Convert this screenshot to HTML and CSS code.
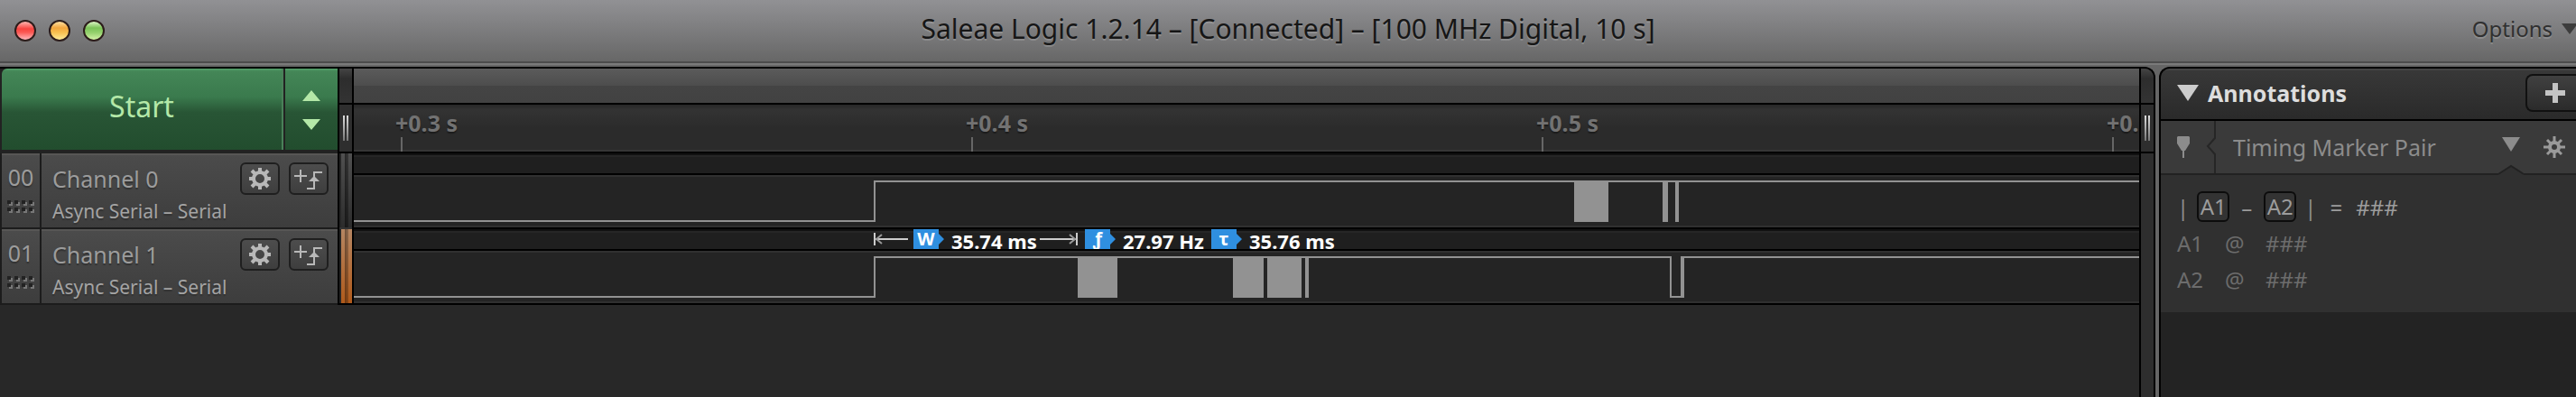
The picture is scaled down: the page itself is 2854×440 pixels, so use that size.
FILE: index.html
```html
<!DOCTYPE html>
<html lang="en">
<head>
<meta charset="utf-8">
<title>Saleae Logic</title>
<link rel="stylesheet" href="styles.css">
</head>
<body>
<svg class="defs" aria-hidden="true">
  <defs>
    <symbol id="gear" viewBox="0 0 24 24">
      <circle cx="12" cy="12" r="7" fill="none" stroke="currentColor" stroke-width="4"/>
      <path d="M12 0v5M12 19v5M0 12h5M19 12h5M3 3l4 4M17 17l4 4M21 3l-4 4M7 17l-4 4" stroke="currentColor" stroke-width="4" fill="none"/>
    </symbol>
    <symbol id="cog" viewBox="0 0 24 24">
      <circle cx="12" cy="12" r="5" fill="none" stroke="currentColor" stroke-width="4"/>
      <path d="M12 0v6M12 18v6M0 12h6M18 12h6M4 4l4 4M16 16l4 4M20 4l-4 4M8 16l-4 4" stroke="currentColor" stroke-width="3" fill="none"/>
    </symbol>
    <symbol id="trigger" viewBox="0 0 32 24">
      <path d="M0 9h14M7 2v14M31 5H22v18h-8" stroke="currentColor" stroke-width="2" fill="none"/>
      <path d="M16 15l6-6 6 6z" fill="currentColor"/>
    </symbol>
    <symbol id="dots" viewBox="0 0 30 14">
      <path d="M2 2h4v4H2zM10 2h4v4h-4zM18 2h4v4h-4zM26 2h4v4h-4zM2 10h4v4H2zM10 10h4v4h-4zM18 10h4v4h-4zM26 10h4v4h-4z" fill="#777"/>
      <path d="M0 0h4v4H0zM8 0h4v4H8zM16 0h4v4h-4zM24 0h4v4h-4zM0 8h4v4H0zM8 8h4v4H8zM16 8h4v4h-4zM24 8h4v4h-4z" fill="#222"/>
    </symbol>
  </defs>
</svg>

<header class="titlebar">
  <div class="lights">
    <button class="light red" aria-label="Close"></button>
    <button class="light amber" aria-label="Minimize"></button>
    <button class="light green" aria-label="Zoom"></button>
  </div>
  <h1 class="title">Saleae Logic 1.2.14 – [Connected] – [100 MHz Digital, 10 s]</h1>
  <button class="options">Options
    <svg width="18" height="12" viewBox="0 0 18 12"><path d="M0 0h18L9 12z" fill="#3c3c3c"/></svg>
  </button>
</header>

<main class="main">
  <section class="workspace">
    <div class="channels">
      <div class="startbar">
        <button class="start">Start</button>
        <button class="stepper" aria-label="Capture settings">
          <svg width="20" height="44" viewBox="0 0 20 44"><path d="M10 0l10 12H0zM0 32h20L10 44z" fill="#b4e8a8"/></svg>
        </button>
      </div>
      <div class="channel">
        <div class="index">00<svg width="30" height="14"><use href="#dots"/></svg></div>
        <div class="info"><span class="name">Channel 0</span><span class="analyzer">Async Serial – Serial</span></div>
        <div class="tools">
          <button class="tool" aria-label="Channel 0 settings"><svg width="24" height="24"><use href="#gear"/></svg></button>
          <button class="tool" aria-label="Channel 0 trigger"><svg width="32" height="24"><use href="#trigger"/></svg></button>
        </div>
      </div>
      <div class="channel">
        <div class="index">01<svg width="30" height="14"><use href="#dots"/></svg></div>
        <div class="info"><span class="name">Channel 1</span><span class="analyzer">Async Serial – Serial</span></div>
        <div class="tools">
          <button class="tool" aria-label="Channel 1 settings"><svg width="24" height="24"><use href="#gear"/></svg></button>
          <button class="tool" aria-label="Channel 1 trigger"><svg width="32" height="24"><use href="#trigger"/></svg></button>
        </div>
      </div>
    </div>

    <div class="handle">
      <div class="handle-top"></div>
      <div class="handle-grip"><i></i><i></i></div>
      <div class="swatch"></div>
      <div class="swatch orange"></div>
    </div>

    <div class="waves">
      <div class="scrollbar"></div>
      <div class="ruler">
        <div class="tick">+0.3 s</div>
        <div class="tick">+0.4 s</div>
        <div class="tick">+0.5 s</div>
        <div class="tick">+0.6 s</div>
      </div>
      <div class="lane">
        <div class="strip"></div>
        <svg class="trace">
          <path d="M0 47H577V3H4000" fill="none" stroke="#929292" stroke-width="2"/>
          <path d="M1352 2h38v46h-38zM1450 2h6v46h-6zM1464 2h4v46h-4z" fill="#929292"/>
        </svg>
      </div>
      <div class="lane">
        <div class="strip measures">
          <svg class="span-start" width="38" height="22" viewBox="0 0 38 22"><path d="M1 4v14M2 11h36" stroke="#ccc" stroke-width="2"/><path d="M9 6l-6 5 6 5" fill="none" stroke="#999" stroke-width="2"/></svg>
          <span class="tag">W</span><span class="value">35.74 ms</span>
          <svg class="span-end" width="42" height="22" viewBox="0 0 42 22"><path d="M41 4v14M0 11h40" stroke="#ccc" stroke-width="2"/><path d="M33 6l6 5-6 5" fill="none" stroke="#999" stroke-width="2"/></svg>
          <span class="tag">ƒ</span><span class="value">27.97 Hz</span>
          <span class="tag">τ</span><span class="value">35.76 ms</span>
        </div>
        <svg class="trace">
          <path d="M0 47H577V3H1459V47H1472V3H4000" fill="none" stroke="#929292" stroke-width="2"/>
          <path d="M802 2h44v46h-44zM974 2h34v46h-34zM1012 2h38v46h-38zM1054 2h4v46h-4zM1470 2h4v46h-4z" fill="#929292"/>
        </svg>
      </div>
    </div>

    <div class="handle right">
      <div class="handle-top"></div>
      <div class="handle-grip"><i></i><i></i></div>
    </div>
  </section>

  <aside class="sidebar">
    <div class="side-head">
      <button class="toggle">
        <svg width="24" height="18" viewBox="0 0 24 18"><path d="M0 0h24L12 18z" fill="#ccc"/></svg>Annotations
      </button>
      <button class="add" aria-label="Add annotation">
        <svg width="22" height="22" viewBox="0 0 22 22"><path d="M11 0v22M0 11h22" stroke="#c4c4c4" stroke-width="6"/></svg>
      </button>
    </div>
    <div class="marker">
      <svg width="14" height="24" viewBox="0 0 14 24"><path d="M1 0h12l1 1v7l-5 8H8v8H6v-8H5L0 8V1z" fill="#8c8c8c"/></svg>
      <svg class="notch" width="12" height="58" viewBox="0 0 12 58"><path d="M10 0v19L2 28l8 9v21" fill="none" stroke="#262626" stroke-width="2"/></svg>
      <select class="kind" aria-label="Annotation type"><option>Timing Marker Pair</option></select>
      <svg class="drop" width="28" height="58" viewBox="0 0 28 58"><path d="M4 18h20L14 34z" fill="#8c8c8c"/><path d="M0 60v-1l14-9 14 9v1z" fill="#303030"/><path d="M0 59l14-9 14 9" fill="none" stroke="#222" stroke-width="2"/></svg>
      <button class="cog" aria-label="Annotation settings"><svg width="24" height="24"><use href="#cog"/></svg></button>
    </div>
    <div class="readout">
      <div class="formula"><span class="bar">|</span><button class="key">A1</button><span class="minus">–</span><button class="key">A2</button><span class="bar">|</span><span class="equals">=</span><span>###</span></div>
      <div class="point"><span>A1</span><span>@</span><span>###</span></div>
      <div class="point"><span>A2</span><span>@</span><span>###</span></div>
    </div>
  </aside>
</main>
</body>
</html>
```
FILE: styles.css
```css
* { box-sizing: border-box; }
body {
  margin: 0;
  min-height: 100vh;
  display: flex;
  flex-direction: column;
  overflow: hidden;
  background: #666;
  color: #9c9c9c;
  font-family: "Noto Sans", "Open Sans", sans-serif;
  font-size: 25px;
}
button, select {
  margin: 0;
  padding: 0;
  border: 0;
  background: none;
  color: inherit;
  font: inherit;
}
svg { display: block; flex: none; }
.defs { position: absolute; width: 0; height: 0; }

.titlebar {
  display: grid;
  grid-template-columns: 1fr auto 1fr;
  align-items: center;
  height: 74px;
  padding-bottom: 10px;
  background: linear-gradient(#919194, #676767 68px, #4c4c4c 68px, #4c4c4c 70px, #7a7a7a 70px, #7a7a7a 72px, #666 72px);
}
.lights { display: flex; gap: 14px; padding: 4px 0 0 16px; }
.light {
  width: 24px;
  height: 24px;
  border: 2px solid #2c1c1a;
  border-radius: 50%;
}
.red { background: linear-gradient(#ffb5b0, #f8433f 40%, #fb5a55 60%, #ffb9bd); }
.amber { background: linear-gradient(#ffe0a0, #f3a63e 35%, #f8c050 60%, #ffec98); }
.green { background: linear-gradient(#dcf5c4, #7cc258 35%, #93d06c 60%, #d4f2a8); }
.title {
  margin: 0;
  color: #161616;
  font-size: 30px;
  font-weight: 400;
  line-height: 40px;
  text-shadow: 0 2px 0 rgba(255, 255, 255, .18);
}
.options {
  display: flex;
  align-items: center;
  justify-self: end;
  gap: 10px;
  margin-right: -2px;
  color: #303030;
  font-size: 24px;
  line-height: 32px;
  text-shadow: 0 2px 0 rgba(255, 255, 255, .18);
}

.main { flex: 1; display: flex; gap: 4px; }
.workspace {
  flex: 1;
  min-width: 0;
  display: flex;
  align-items: flex-start;
  overflow: hidden;
  border: solid #000;
  border-width: 2px 2px 0 0;
  border-radius: 0 12px 0 0;
  background: #282828;
}

.channels {
  flex: none;
  width: 376px;
  border: solid #000;
  border-width: 0 2px 0 0;
  background: #1c1c1c;
}
.startbar {
  display: flex;
  gap: 2px;
  height: 94px;
  padding: 0 0 4px 2px;
  background: #222;
}
.start, .stepper {
  background: linear-gradient(#54a36c, #448657 3px, #3a7a4d 35%, #285535 54%, #224d2e);
  color: #b4e8a8;
}
.start {
  flex: 1;
  padding-bottom: 8px;
  border-right: 2px solid #4a8059;
  border-radius: 6px 0 0 0;
  font-size: 32px;
}
.stepper { display: flex; justify-content: center; align-items: center; width: 58px; padding-top: 2px; }
.channel {
  display: flex;
  gap: 2px;
  height: 84px;
  padding: 0 0 2px 2px;
}
.index, .info, .tools {
  border-top: 2px solid #575655;
  background: linear-gradient(#4b4b4b, #3d3d3d);
  text-shadow: 0 2px 1px #333;
}
.index {
  display: flex;
  flex-direction: column;
  align-items: center;
  gap: 10px;
  width: 42px;
  padding-top: 8px;
  line-height: 32px;
}
.info {
  flex: 1;
  display: flex;
  flex-direction: column;
  gap: 6px;
  padding: 10px 0 0 12px;
  white-space: nowrap;
}
.name { line-height: 32px; }
.analyzer { color: #a4a4a4; font-size: 21px; line-height: 28px; }
.tools { display: flex; gap: 10px; margin-left: -2px; padding: 8px 10px 0 0; }
.tool {
  display: flex;
  align-items: center;
  justify-content: center;
  width: 44px;
  height: 36px;
  border: 2px solid #1f1f1f;
  border-radius: 6px;
  background: linear-gradient(#4d4d4d, #3e3e3e);
  color: #b8b8b8;
}

.handle { flex: none; width: 16px; border-right: 2px solid #000; background: #2e2e2e; }
.handle-top {
  height: 40px;
  border-bottom: 2px solid #000;
  background: linear-gradient(#444, #2d2d2d 30%, #333);
}
.handle-grip {
  display: flex;
  gap: 2px;
  height: 54px;
  padding: 12px 4px 0;
  border-bottom: 2px solid #000;
  background: #2e2e2e;
}
.handle-grip i { width: 2px; height: 28px; background: linear-gradient(#ddd, #777); }
.swatch {
  height: 84px;
  border-bottom: 2px solid #333;
  background:
    linear-gradient(90deg, #262626 2px, transparent 2px, transparent 6px, rgba(0, 0, 0, .5) 6px, rgba(0, 0, 0, .3) 10px, transparent 10px),
    linear-gradient(#505050, #2c2c2c);
}
.swatch.orange {
  border-bottom-color: #000;
  background:
    linear-gradient(90deg, #262626 2px, transparent 2px, transparent 6px, rgba(0, 0, 0, .4) 6px, rgba(0, 0, 0, .2) 10px, transparent 10px),
    linear-gradient(#b58662, #b05a1b);
}
.handle.right { align-self: stretch; border-left: 2px solid #000; border-right: 0; }

.waves { flex: 1; min-width: 0; background: #242424; }
.scrollbar {
  height: 40px;
  border-bottom: 2px solid #000;
  background: linear-gradient(#5b5b5b, #4d4d4d 50%, #444 50%, #424242);
}
.ruler {
  display: flex;
  overflow: hidden;
  height: 54px;
  padding: 4px 0 0 46px;
  border-bottom: 2px solid #000;
  background: linear-gradient(#272727, #333 6px, #2b2b2b 50%, #2b2b2b 50px, #363636 50px);
}
.tick {
  flex: none;
  width: 632px;
  color: #727272;
  font-size: 25px;
  font-weight: 700;
  line-height: 32px;
  text-shadow: 0 2px 1px #1c1c1c;
}
.tick::after { content: ""; display: block; width: 2px; height: 16px; margin-left: 6px; background: #666; }
.lane { border-bottom: 2px solid #000; }
.strip {
  display: flex;
  height: 24px;
  border-bottom: 2px solid #000;
  background: linear-gradient(#111 2px, #262626 2px, #262626 4px, #1f1f1f 4px);
}
.trace {
  width: 100%;
  height: 58px;
  padding-top: 2px;
  border: solid #303030;
  border-width: 2px 0;
}
.measures { padding-left: 576px; white-space: nowrap; }
.tag {
  display: flex;
  justify-content: center;
  width: 34px;
  height: 22px;
  padding-right: 6px;
  background: #2f8fe0;
  clip-path: polygon(0 0, 28px 0, 28px 5px, 34px 11px, 28px 17px, 28px 22px, 0 22px);
  color: #fff;
  font-size: 20px;
  font-weight: 700;
  line-height: 22px;
}
.value {
  width: 106px;
  padding-left: 8px;
  color: #fff;
  font-size: 22px;
  font-weight: 700;
  line-height: 27px;
}
.span-start { margin-right: 6px; }
.span-end { margin-right: 8px; }

.sidebar {
  flex: none;
  width: 462px;
  overflow: hidden;
  border: solid #000;
  border-width: 2px 0 0 2px;
  border-radius: 12px 0 0 0;
  background: #232323;
}
.side-head {
  display: flex;
  justify-content: space-between;
  height: 58px;
  padding: 6px 0 8px 18px;
  border-bottom: 2px solid #000;
  background: linear-gradient(#444 2px, #383838 2px, #2a2a2a);
}
.toggle {
  display: flex;
  align-items: center;
  gap: 10px;
  color: #ddd;
  font-weight: 700;
}
.add {
  display: flex;
  align-items: center;
  width: 56px;
  height: 42px;
  padding-left: 20px;
  border: solid #111;
  border-width: 2px 0 2px 2px;
  border-radius: 8px 0 0 8px;
  background: linear-gradient(#404040, #2b2b2b);
}
.marker {
  display: flex;
  align-items: center;
  height: 60px;
  padding: 0 12px 0 18px;
  border-bottom: 2px solid #222;
  background: #3a3a3a;
  color: #8c8c8c;
}
.notch { margin: 0 18px; }
.kind { flex: 1; appearance: none; min-width: 0; height: 40px; }
.drop { margin-right: 22px; overflow: visible; }
.cog { color: #9a9a9a; }
.readout { padding: 16px 0 16px 18px; background: #303030; font-size: 24px; }
.formula { display: flex; align-items: center; gap: 9px; height: 38px; margin-bottom: 2px; }
.key {
  width: 36px;
  height: 34px;
  border: 2px solid #0c0c0c;
  border-radius: 6px;
  background: #333;
  line-height: 30px;
}
.bar { color: #8c8c8c; }
.minus { padding: 0 4px; }
.equals { padding: 0 6px; }
.point { display: grid; grid-template-columns: 53px 45px 1fr; color: #6c6c6c; line-height: 40px; }
```
